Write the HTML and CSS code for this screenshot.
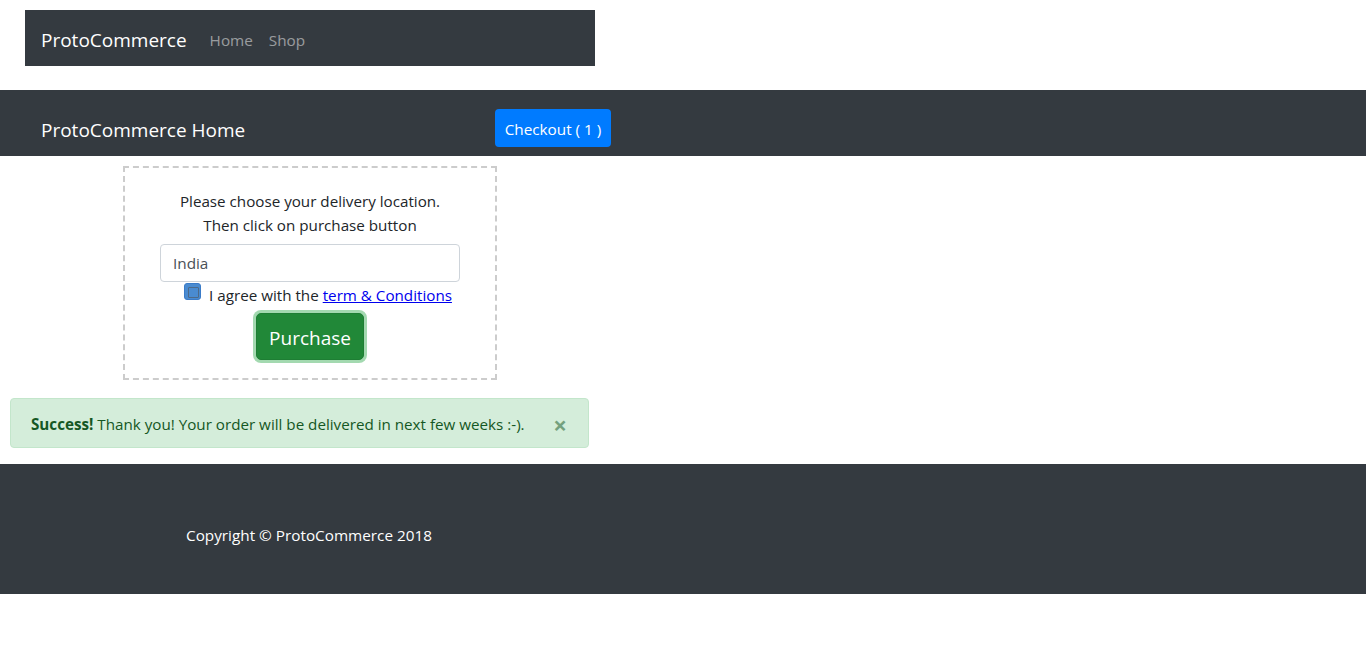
FILE: index.html
```html
<!DOCTYPE html>
<html>
<head>
<meta charset="utf-8">
<link rel="stylesheet" href="styles.css">
</head>
<body>
<nav class="topnav">
  <span class="brand">ProtoCommerce</span>
  <a class="nav-link">Home</a>
  <a class="nav-link">Shop</a>
</nav>
<header class="bar">
  <span class="bar-title">ProtoCommerce Home</span>
  <button class="btn-checkout">Checkout ( 1 )</button>
</header>
<main class="content">
  <div class="box">
    <p class="msg">Please choose your delivery location.<br>Then click on purchase button</p>
    <input class="field" type="text" value="India">
    <label class="agree"><span class="check"></span>I agree with the <a class="terms" href="#">term &amp; Conditions</a></label>
    <button class="btn-purchase">Purchase</button>
  </div>
  <div class="alert"><span><b>Success!</b> Thank you! Your order will be delivered in next few weeks :-).</span><span class="close">×</span></div>
</main>
<footer class="footer">
  <p class="copy">Copyright © ProtoCommerce 2018</p>
</footer>
</body>
</html>
```
FILE: styles.css
```css
* { box-sizing: border-box; }
body { margin: 0; font-family: "Open Sans", "Noto Sans", sans-serif; font-size: 16px; color: #212529; background: #fff; }
.topnav { margin: 10px 0 0 25px; width: 570px; height: 56px; background: #343a40; display: flex; align-items: center; padding: 3px 16px 0; }
.brand { color: #fff; font-size: 19px; margin-right: 23px; }
.nav-link { color: rgba(255,255,255,.5); font-size: 15.3px; margin-right: 16px; }
.bar { margin-top: 24px; height: 66px; background: #343a40; display: flex; align-items: center; padding: 0 0 0 41px; }
.bar-title { color: #fff; font-size: 19px; width: 454px; padding-top: 14px; }
.btn-checkout { background: #007bff; color: #fff; border: none; border-radius: 4px; height: 38px; width: 116px; font: inherit; font-size: 15.3px; padding: 2px 0 0; margin-top: 10px; }
.content { padding: 10px 0 16px 10px; }
.box { margin-left: 113px; width: 374px; height: 214px; border: 2px dashed #ccc; display: flex; flex-direction: column; align-items: center; padding-top: 21px; }
.msg { margin: 0; text-align: center; line-height: 24px; font-size: 15.2px; }
.field { margin-top: 7px; width: 300px; height: 38px; border: 1px solid #ced4da; border-radius: 4px; padding: 0 12px; font: inherit; font-size: 15.3px; color: #495057; }
.agree { display: flex; align-items: flex-start; font-size: 15.2px; line-height: 24px; margin-top: 1px; margin-left: 16px; }
.check { width: 17px; height: 17px; background: #4a8bd0; border-radius: 3px; margin-right: 8px; position: relative; border: 1px solid #3a7bc8; }
.check::after { content: ""; position: absolute; left: 3px; top: 3px; width: 9px; height: 9px; border: 1px solid #4d6a89; border-radius: 1px; }
.terms { color: #0000ee; text-decoration: underline; margin-left: 4px; }
.btn-purchase { margin-top: 6px; width: 108px; height: 47px; background: #218838; color: #fff; border: 1px solid #1e7e34; border-radius: 5px; box-shadow: 0 0 0 3px rgba(72,180,97,.5); font: inherit; font-size: 19px; padding: 2px 0 0; }
.alert { margin-top: 18px; width: 579px; height: 50px; background: #d4edda; border: 1px solid #c3e6cb; border-radius: 4px; color: #155724; display: flex; align-items: center; justify-content: space-between; padding: 2px 21px 0 20px; font-size: 15.2px; }
.close { font-size: 24px; font-weight: bold; color: #155724; opacity: .5; }
.footer { height: 130px; background: #343a40; display: flex; align-items: center; padding: 12px 0 0 186px; }
.copy { margin: 0; color: #fff; font-size: 15.3px; }
```
